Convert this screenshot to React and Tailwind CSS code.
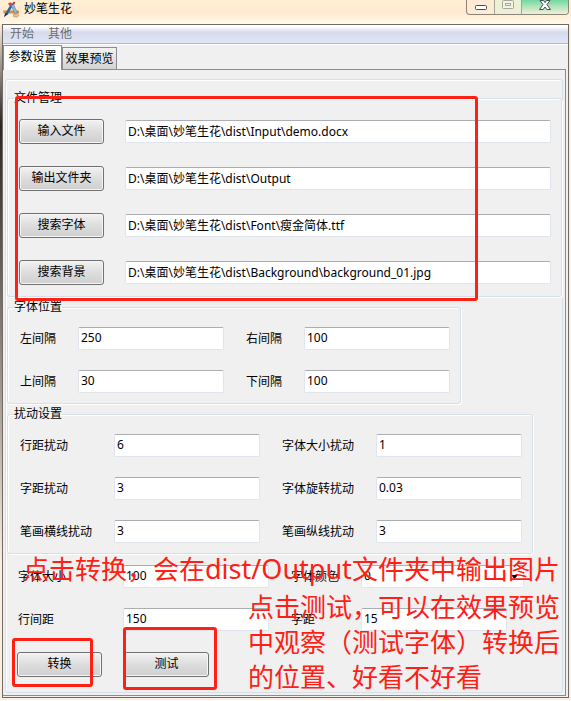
import { useId, useState } from 'react'

const files = [
  { action: '输入文件', path: 'D:\\桌面\\妙笔生花\\dist\\Input\\demo.docx' },
  { action: '输出文件夹', path: 'D:\\桌面\\妙笔生花\\dist\\Output' },
  { action: '搜索字体', path: 'D:\\桌面\\妙笔生花\\dist\\Font\\瘦金简体.ttf' },
  { action: '搜索背景', path: 'D:\\桌面\\妙笔生花\\dist\\Background\\background_01.jpg' },
]

const margins = [
  ['左间隔', '250'],
  ['右间隔', '100'],
  ['上间隔', '30'],
  ['下间隔', '100'],
]

const jitter = [
  ['行距扰动', '6'],
  ['字体大小扰动', '1'],
  ['字距扰动', '3'],
  ['字体旋转扰动', '0.03'],
  ['笔画横线扰动', '3'],
  ['笔画纵线扰动', '3'],
]

function TextBox({ className = 'w-[146px]', ...props }) {
  return (
    <input
      type="text"
      className={`h-[23px] rounded-xs border border-[#e0e4ec] border-t-[#abadb3] bg-white px-0.5 pb-0.5 outline-none ${className}`}
      {...props}
    />
  )
}

function Button({ children }) {
  return (
    <button
      type="button"
      className="h-[25px] w-[85px] shrink-0 rounded-[3px] border border-[#707070] bg-linear-to-b from-[#f2f2f2] from-0% via-[#dddddd] via-50% to-[#cfcfcf] pb-0.5 shadow-[inset_0_0_0_1px_#f6f6f6]"
    >
      {children}
    </button>
  )
}

function Field({ label, value }) {
  const id = useId()
  return (
    <>
      <label htmlFor={id}>{label}</label>
      <TextBox id={id} defaultValue={value} />
    </>
  )
}

function Group({ title, className, children }) {
  return (
    <fieldset className={`rounded-[3px] border border-[#d5dfe5] shadow-[inset_1px_1px_0_#fff,1px_1px_0_#fff] ${className}`}>
      <legend className="-ml-1.5 h-3.5 leading-3.5">{title}</legend>
      {children}
    </fieldset>
  )
}

function Logo() {
  return (
    <svg className="size-[17px]" viewBox="0 0 17 17" aria-hidden="true">
      <path d="M.5 9h15.500v3.500H.5z" fill="#d68f45" />
      <path d="M.5 9h15.500v1H.5z" fill="#efbd7c" />
      <path d="M1 16 2.500 12 8.500 2l2.200 1.200L5 13z" fill="#2467ac" />
      <path d="m2.500 12 2.500 1-4 3z" fill="#1a2f4d" />
      <path d="m8 4.500 2.500-1L14.500 12l-2.500 1z" fill="#8fb9d8" stroke="#47739b" strokeWidth=".5" />
      <path d="m5 2.500 2.500-1.300 1.800 2.600L7 5.500z" fill="#d8434b" />
      <path d="m9 2.500 1.500-1.800L12.500 1l-1.300 2.800z" fill="#c83c3c" />
      <path d="m10.500 13.500 3.500-1.200 2 2.200-2.500 1.700-3-.7z" fill="#eac07a" stroke="#b0773b" strokeWidth=".5" />
    </svg>
  )
}

function TitleBar() {
  return (
    <header className="flex h-6 items-start justify-between bg-linear-to-b from-[#fff0d2] via-[#ffe9d3] to-[#fffbe8] pr-0.5 pl-[3px]">
      <div className="flex items-center gap-1 text-xs leading-[18px]">
        <Logo />
        <h1>妙笔生花</h1>
      </div>
      <div className="flex h-[15px] rounded-b-[4px] border border-t-0 border-[#8c8478] bg-[#fdebd6]">
        <button type="button" aria-label="最小化" className="flex w-7 justify-center border-r border-[#aaa196]">
          <svg className="h-3.5 w-4" viewBox="0 0 16 14">
            <rect x="2.5" y="5.5" width="11" height="4" rx="1" fill="#fff" stroke="#4a4a58" />
          </svg>
        </button>
        <button type="button" aria-label="最大化" className="flex w-[27px] justify-center border-r border-[#aaa196] bg-[#ecf0d4]">
          <svg className="h-3.5 w-4" viewBox="0 0 16 14" fill="none" stroke="#a4a99b">
            <rect x="2.5" y=".5" width="11" height="8" rx="1" fill="#f3f3e4" />
            <rect x="5.5" y="3.5" width="5" height="2" />
          </svg>
        </button>
        <button type="button" aria-label="关闭" className="flex w-[46px] justify-center rounded-br-[3px] bg-linear-to-b from-[#6fd9a0] to-[#eff0d8]">
          <svg className="h-3.5 w-4" viewBox="0 0 16 14">
            <path d="M3 .5h3.500L8 2.600 9.500.5H13L10 4.600 13.500 9.500H9.800L8 7 6.200 9.500H2.500L6 4.600z" fill="#fff" stroke="#4a4a58" />
          </svg>
        </button>
      </div>
    </header>
  )
}

function Annotations() {
  return (
    <div className="pointer-events-none absolute inset-0 text-[26px] leading-[35px] whitespace-nowrap text-[#ff2015]">
      <div className="absolute top-24 left-[15px] h-[205px] w-[463px] rounded-[3px] border-3 border-[#ff2015]" />
      <div className="absolute top-[638px] left-3 h-[49px] w-[81px] rounded-[3px] border-3 border-[#ff2015]" />
      <div className="absolute top-[627px] left-[123px] h-[63px] w-[94px] rounded-[3px] border-3 border-[#ff2015]" />
      <p className="absolute top-[551px] left-[23px]">
        点击转换，会在<span className="text-[27px]">dist/Output</span>文件夹中输出图片
      </p>
      <p className="absolute top-[590px] left-[248px]">
        点击测试，可以在效果预览
        <br />
        中观察（测试字体）转换后
        <br />
        的位置、好看不好看
      </p>
    </div>
  )
}

export default function App() {
  const [tab, setTab] = useState('params')
  const active = 'relative z-10 -mb-px h-[25px] border border-b-0 border-[#898c95] bg-white pb-0.5'
  const idle = 'h-[22px] border border-b-0 border-[#898c95] bg-linear-to-b from-[#f2f2f2] to-[#d3d3d3]'

  return (
    <div className="relative bg-[#fdeedd] font-['Noto_Sans','Noto_Sans_CJK_SC',sans-serif] text-xs text-black">
      <TitleBar />
      <div className="bg-linear-to-b from-[#fdeedd] via-[#2e2522] via-15% to-[#fdeedd] to-80% pl-0.5">
        <div className="bg-[#fdeedd] pr-0.5">
          <div className="border border-[#6d6a68] bg-[#f0f0f0]">
            <nav className="flex h-[19px] items-center gap-3.5 border-b border-[#b0bacd] bg-linear-to-b from-white from-10% via-[#d5dbed] via-40% to-[#e1e6f6] pl-[7px] text-[#6d6d6d]">
              <button type="button">开始</button>
              <button type="button">其他</button>
            </nav>

            <div role="tablist" className="flex h-[25px] items-end border-t border-white">
              <button type="button" role="tab" aria-selected={tab === 'params'} onClick={() => setTab('params')} className={`w-[59px] ${active}`}>
                参数设置
              </button>
              <button type="button" role="tab" aria-selected={tab === 'preview'} onClick={() => setTab('preview')} className={`w-[55px] ${idle}`}>
                效果预览
              </button>
            </div>

            <main className="mr-0.5 mb-px border border-l-0 border-[#898c95] pt-[9px] pr-0.5 pb-0.5 pl-0.5">
              <div className="rounded-[3px] border border-[#d5dfe5] pt-[11px] pb-[15px] pl-px shadow-[inset_1px_1px_0_#fff]">
                <Group title="文件管理" className="flex flex-col gap-[22px] pt-3.5 pr-2.5 pb-[11px] pl-3">
                  {files.map(({ action, path }) => (
                    <div key={action} className="-ml-px flex items-center gap-[21px]">
                      <Button>{action}</Button>
                      <TextBox aria-label={action} defaultValue={path} className="min-w-0 flex-1" />
                    </div>
                  ))}
                </Group>

                <Group title="字体位置" className="mt-[3px] grid w-fit grid-cols-[58px_168px_58px_146px] items-center gap-y-5 pt-[13px] pr-2.5 pb-2.5 pl-3">
                  {margins.map(([label, value]) => (
                    <Field key={label} label={label} value={value} />
                  ))}
                </Group>

                <Group title="扰动设置" className="mt-[3px] grid w-fit grid-cols-[94px_168px_94px_146px] items-center gap-y-5 pt-[13px] pr-2.5 pb-2.5 pl-3">
                  {jitter.map(([label, value]) => (
                    <Field key={label} label={label} value={value} />
                  ))}
                </Group>

                <div className="grid w-fit grid-cols-[105px_168px_70px_163px] items-center gap-y-5 pt-[11px] pl-[11px]">
                  <Field label="字体大小" value="100" />
                  <label htmlFor="color">字体颜色</label>
                  <div className="relative">
                    <select id="color" className="block h-[23px] w-full appearance-none rounded-xs border border-[#e0e4ec] border-t-[#abadb3] bg-white px-0.5 pb-0.5">
                      <option>0</option>
                    </select>
                    <svg className="pointer-events-none absolute top-2.5 right-1.5 h-1 w-[7px]" viewBox="0 0 7 4">
                      <path d="M0 0h7L3.500 4z" />
                    </svg>
                  </div>
                  <Field label="行间距" value="150" />
                  <Field label="字距" value="15" />
                </div>

                <div className="flex gap-[22px] pt-[21px] pl-2.5">
                  <Button>转换</Button>
                  <Button>测试</Button>
                </div>
              </div>
            </main>
          </div>
        </div>
      </div>
      <div className="h-0.5" />
      <Annotations />
    </div>
  )
}
